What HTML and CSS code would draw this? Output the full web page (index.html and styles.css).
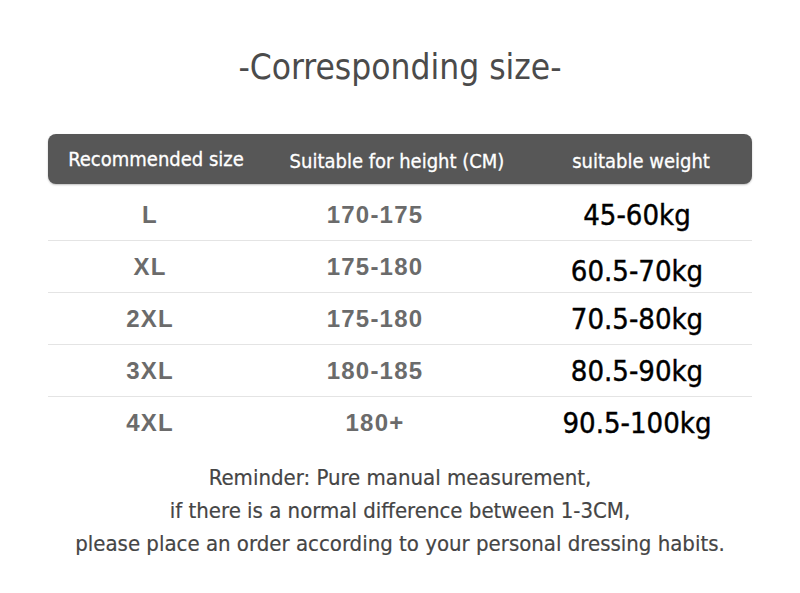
FILE: index.html
```html
<!DOCTYPE html>
<html>
<head>
<meta charset="utf-8">
<link rel="stylesheet" href="styles.css">
</head>
<body>
<div class="page">
  <h1 class="title">-Corresponding size-</h1>
  <div class="table">
    <div class="head">
      <div class="hcell">Recommended size</div>
      <div class="hcell">Suitable for height (CM)</div>
      <div class="hcell">suitable weight</div>
    </div>
    <div class="rows">
      <div class="row"><div class="size">L</div><div class="height">170-175</div><div class="weight">45-60kg</div></div>
      <div class="row"><div class="size">XL</div><div class="height">175-180</div><div class="weight low">60.5-70kg</div></div>
      <div class="row"><div class="size">2XL</div><div class="height">175-180</div><div class="weight">70.5-80kg</div></div>
      <div class="row"><div class="size">3XL</div><div class="height">180-185</div><div class="weight">80.5-90kg</div></div>
      <div class="row last"><div class="size">4XL</div><div class="height">180+</div><div class="weight">90.5-100kg</div></div>
    </div>
  </div>
  <div class="note">
    <p>Reminder: Pure manual measurement,</p>
    <p>if there is a normal difference between 1-3CM,</p>
    <p>please place an order according to your personal dressing habits.</p>
  </div>
</div>
</body>
</html>
```
FILE: styles.css
```css
html, body {
  margin: 0;
  padding: 0;
  background: #ffffff;
}
.page {
  width: 800px;
  height: 593px;
  overflow: hidden;
  font-family: "DejaVu Sans Condensed", "Liberation Sans", sans-serif;
}
.title {
  margin: 0;
  padding-top: 45px;
  height: 134px;
  box-sizing: border-box;
  text-align: center;
  font-size: 35px;
  line-height: 44px;
  font-weight: normal;
  color: #4b4b4b;
}
.table {
  margin: 0 48px;
}
.head {
  display: grid;
  grid-template-columns: 216px 266px 1fr;
  height: 50px;
  align-items: center;
  background: #575757;
  border-radius: 8px;
  color: #ffffff;
  font-size: 20px;
  -webkit-text-stroke: 0.3px #ffffff;
  box-shadow: 0 1px 2px rgba(0,0,0,0.25);
}
.hcell {
  text-align: center;
}
.hcell:nth-child(2), .hcell:nth-child(3) {
  padding-top: 4px;
}
.rows {
  margin-top: 5px;
}
.row {
  display: grid;
  grid-template-columns: 204px 246px 1fr;
  height: 52px;
  align-items: center;
  border-bottom: 1px solid #e4e4e4;
  box-sizing: border-box;
}
.row.last {
  border-bottom: none;
}
.size, .height {
  text-align: center;
  font-family: "Liberation Sans", "DejaVu Sans", sans-serif;
  font-weight: bold;
  font-size: 24px;
  color: #6b6b6b;
  letter-spacing: 1.2px;
}
.weight {
  text-align: center;
  padding-left: 24px;
  font-size: 29px;
  color: #000000;
  -webkit-text-stroke: 0.4px #000000;
}
.weight.low {
  padding-top: 8px;
}
.note {
  margin-top: 12px;
  text-align: center;
  color: #454545;
  font-size: 22px;
  line-height: 33px;
  -webkit-text-stroke: 0.2px #454545;
}
.note p {
  margin: 0;
}
```
